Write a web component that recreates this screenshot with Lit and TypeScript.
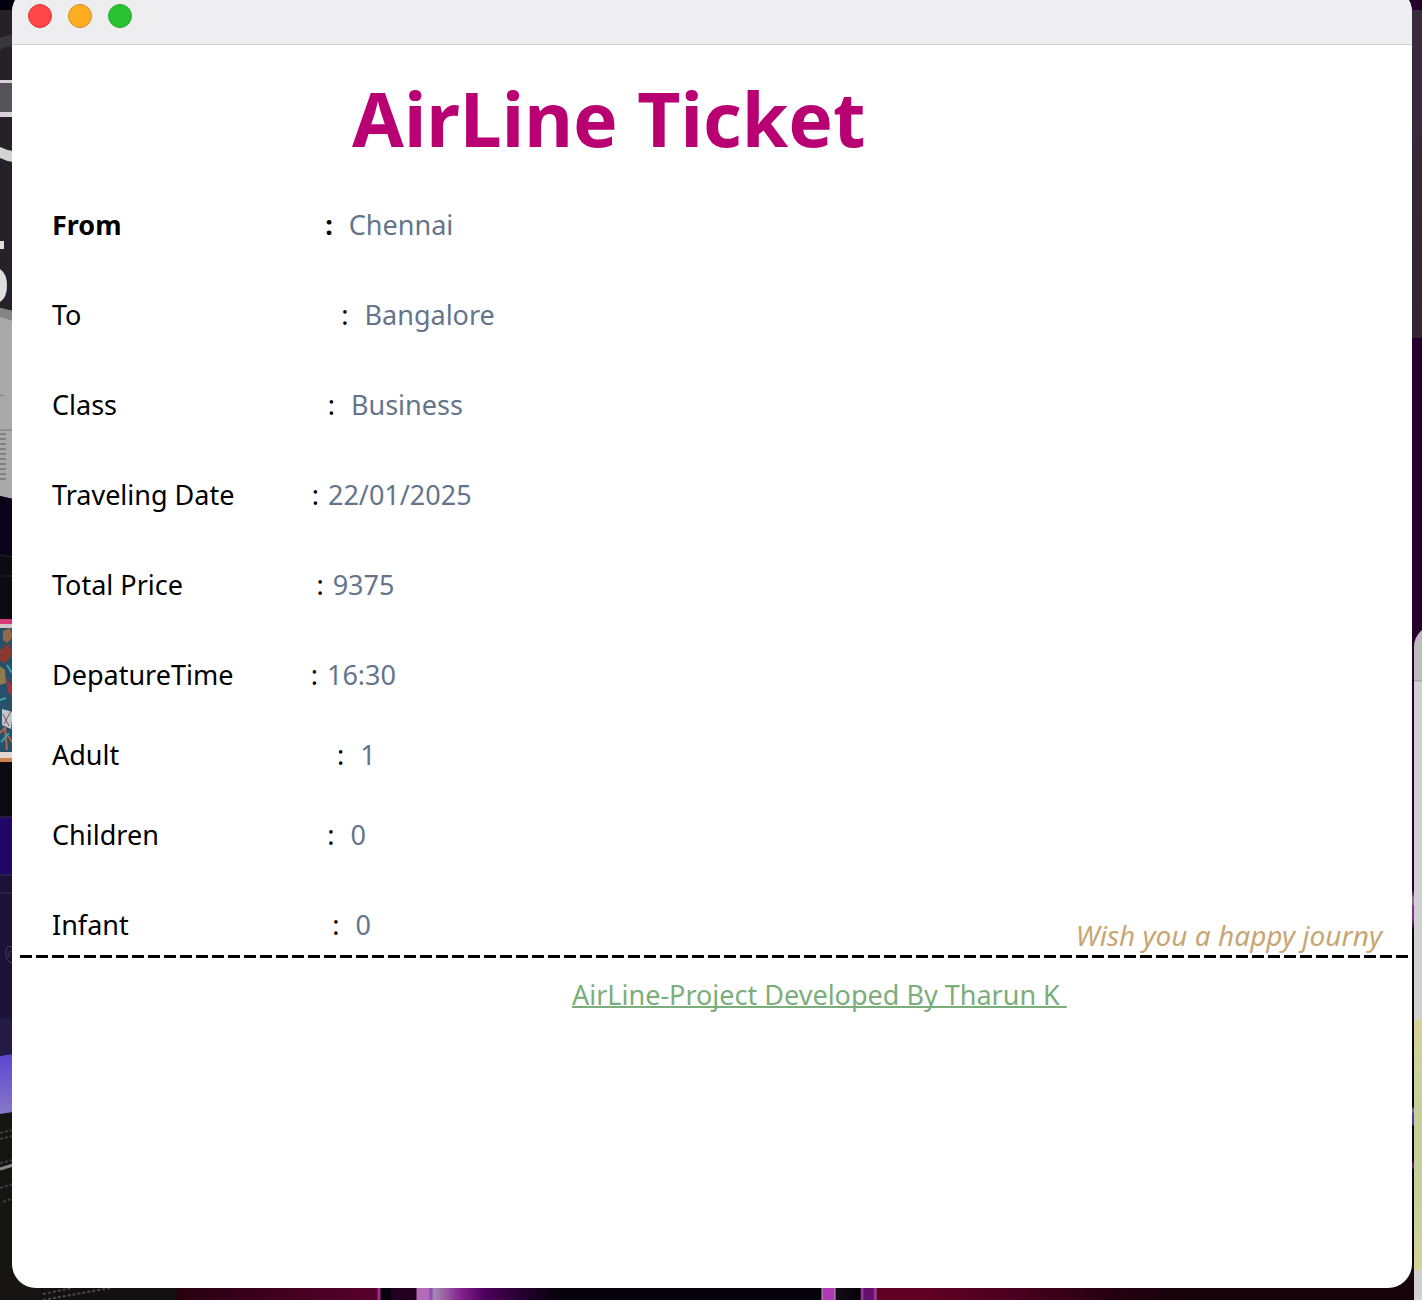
import { LitElement, html, css } from "lit";
import { customElement } from "lit/decorators.js";

interface Detail {
  label: string;
  spaces: number;
  after: number;
  value: string;
  strong?: boolean;
  close?: boolean;
}

const DETAILS: Detail[] = [
  { label: "From", spaces: 29, after: 2, value: "Chennai", strong: true },
  { label: "To", spaces: 37, after: 2, value: "Bangalore" },
  { label: "Class", spaces: 30, after: 2, value: "Business" },
  { label: "Traveling Date", spaces: 11, after: 1, value: "22/01/2025" },
  { label: "Total Price", spaces: 19, after: 1, value: "9375" },
  { label: "DepatureTime", spaces: 11, after: 1, value: "16:30" },
  { label: "Adult", spaces: 31, after: 2, value: "1", close: true },
  { label: "Children", spaces: 24, after: 2, value: "0", close: true },
  { label: "Infant", spaces: 29, after: 2, value: "0" },
];

@customElement("desktop-edge")
export class DesktopEdge extends LitElement {
  static styles = css`
    :host {
      display: block;
    }
    svg {
      display: block;
    }
  `;

  render() {
    return html`<svg width="120" height="1300" viewBox="0 0 120 1300" aria-hidden="true">
      <defs>
        <linearGradient id="glow" x2="0" y2="1">
          <stop offset="0" stop-color="#5b47d2" />
          <stop offset="1" stop-color="#8878c8" />
        </linearGradient>
      </defs>
      <rect width="40" height="1300" fill="#171414" />
      <rect width="40" height="10" fill="#04000e" />
      <rect y="10" width="40" height="300" fill="#242226" />
      <path d="M0 38Q7 35 14 34V46Q6 46 0 50Z" fill="#39373c" />
      <rect y="80" width="13" height="37" fill="#d8d2d8" />
      <rect y="83" width="13" height="29" fill="#57535a" />
      <path d="M0 147Q6 150 13 151V162Q6 161 0 158Z" fill="#d4d4d4" />
      <rect y="241" width="4" height="8" fill="#dedede" />
      <path d="M0 269Q7 274 7 285Q7 298 0 302Z" fill="#dedede" />
      <path d="M0 308L13 311V499L0 496Z" fill="#a9a9aa" />
      <path d="M0 308L13 311V321L0 317Z" fill="#858586" />
      <path d="M0 395L4 396M0 430H13" stroke="#777" />
      <path d="M0 434H6M0 439H6M0 444H6M0 449H6M0 454H6M0 459H6M0 464H6M0 469H6M0 474H6M0 479H6" stroke="#808083" stroke-width="2" />
      <path d="M0 496L13 499V557L0 555Z" fill="#0c0319" />
      <rect y="556" width="13" height="261" fill="#0d0b0f" />
      <path d="M0 576H13M0 555L13 557" stroke="#25232b" />
      <rect y="619" width="13" height="5" fill="#d83a78" />
      <rect y="624" width="13" height="5" fill="#d2c6c7" />
      <rect y="628" width="13" height="124" fill="#27516b" />
      <path d="M3 631L10 628L13 637L7 643L3 640Z" fill="#926849" />
      <path d="M0 650L8 643L13 654L4 664L0 660Z" fill="#883a31" />
      <path d="M0 666L5 670L6 683L0 685Z" fill="#8f7a4f" />
      <path d="M6 678L13 686V696L8 692Z" fill="#a1343b" />
      <path d="M2 709L13 712L11 729L2 725Z" fill="#b8cbd1" />
      <path d="M3 714L9 726M11 711L4 724" stroke="#9f4145" />
      <path d="M0 733L5 728L7 750M8 736L13 743" fill="none" stroke="#b76643" stroke-width="2" />
      <path d="M0 700L6 698M7 665L12 673M1 742L9 733" stroke="#36a1a9" stroke-width="2" />
      <rect y="752" width="13" height="6" fill="#e2d6d1" />
      <rect y="758" width="13" height="4" fill="#ce854d" />
      <rect y="817" width="13" height="58" fill="#210765" />
      <rect y="875" width="13" height="180" fill="#1c1138" />
      <rect y="1018" width="13" height="37" fill="#241a46" />
      <path d="M0 817H13M0 875H13M0 893H13" stroke="#3b3055" />
      <path d="M12 947Q5 944 6 954Q6 961 12 963M12 951Q8 951 9 957" fill="none" stroke="#443b5a" />
      <path d="M0 1056L13 1054V1112L0 1114Z" fill="url(#glow)" />
      <path d="M0 1133L13 1130M0 1139L13 1136M0 1163L13 1160M0 1188L13 1184M3 1202L13 1198" stroke="#403e41" stroke-width="2" stroke-dasharray="3 2" />
      <path d="M0 1169L13 1165" stroke="#8b898d" stroke-width="3" />
      <path d="M43 1294L72 1288M43 1300L110 1288" stroke="#4a484b" stroke-width="2" stroke-dasharray="3 2" />
    </svg>`;
  }
}

@customElement("ticket-window")
export class TicketWindow extends LitElement {
  static styles = css`
    :host {
      display: flex;
      flex-direction: column;
      box-sizing: border-box;
      overflow: hidden;
      background: #fff;
      border-radius: 24px;
      color: #000;
      font-family: "Noto Sans", sans-serif;
      font-size: 27px;
      line-height: 30px;
    }
    .bar {
      display: flex;
      align-items: center;
      gap: 16px;
      height: 56px;
      padding: 0 16px;
      background: #eeeef0;
      border-bottom: 1px solid #cfcfd1;
    }
    .light {
      width: 24px;
      height: 24px;
      padding: 0;
      border: 1px solid #d93b3f;
      border-radius: 50%;
      background: #ff4648;
    }
    .minimise {
      border-color: #d2901c;
      background: #ffae24;
    }
    .zoom {
      border-color: #24a92a;
      background: #28c232;
    }
    .title {
      margin: 23px 0 0 340px;
      font-size: 75px;
      line-height: 100px;
      font-weight: 700;
      color: #b80073;
      white-space: nowrap;
    }
    .body {
      display: flex;
      justify-content: space-between;
      align-items: flex-end;
      padding: 42px 30px 0 40px;
    }
    .details {
      margin: 0;
      padding-bottom: 10px;
    }
    .row {
      display: flex;
      gap: 2px;
      margin-top: 60px;
      white-space: pre;
    }
    .row.close {
      margin-top: 50px;
    }
    .row:first-child {
      margin-top: 0;
    }
    .strong {
      font-weight: 700;
    }
    .value {
      margin: 0;
      color: #64758b;
    }
    .wish {
      margin: 0;
      font-size: 28px;
      font-style: italic;
      color: #c8a674;
    }
    .tear {
      height: 3px;
      margin: 5px 0 0 8px;
      border: 0;
      background: repeating-linear-gradient(90deg, #000 0 12px, transparent 12px 16px);
    }
    .credit {
      margin: 22px 0 0 560px;
      color: #7bae7a;
      text-decoration: underline;
      text-decoration-thickness: 2px;
      text-decoration-skip-ink: none;
      text-underline-offset: 1px;
      white-space: pre;
    }
  `;

  render() {
    return html`
      <header class="bar">
        <button class="light" aria-label="Close"></button>
        <button class="light minimise" aria-label="Minimise"></button>
        <button class="light zoom" aria-label="Zoom"></button>
      </header>
      <h1 class="title">AirLine Ticket</h1>
      <div class="body">
        <dl class="details">
          ${DETAILS.map(
            (d) => html`<div class="row ${d.close ? "close" : ""}"><dt class=${d.strong ? "strong" : ""}>${d.label}${" ".repeat(d.spaces)}:${" ".repeat(d.after)}</dt><dd class="value">${d.value}</dd></div>`
          )}
        </dl>
        <p class="wish">Wish you a happy journy</p>
      </div>
      <hr class="tear" />
      <p class="credit">AirLine-Project Developed By Tharun K </p>
    `;
  }
}

@customElement("app-root")
export class AppRoot extends LitElement {
  static styles = css`
    :host {
      display: block;
    }
    .desktop {
      position: relative;
      display: flex;
      box-sizing: border-box;
      min-height: 100vh;
      padding: 0 10px 12px 12px;
      overflow: hidden;
      background:
        linear-gradient(#26002c 0 10px, #382b3a 10px 40px, #32252f 338px, #26002c 338px 890px, #8b6b91 898px 904px, #8b2b91 906px 918px, #080410 930px 1106px, #7a70a0 1110px, #4b3aa0 1114px 1124px, #080410 1126px 1160px, #7a1f80 1166px, #080410 1170px 1260px, transparent 1270px)
          right top / 10px 100% no-repeat,
        linear-gradient(90deg, #121011 0 176px, #28000f 177px, #58002c 377px, #a52a93 378px 380px, #08020b 381px 390px, #240020 392px 416px, #b36bb8 417px 429px, #8f45b6 430px 431px, #a78bb1 434px, #85248f 460px, #4d005c 485px, #260030 520px, #06030a 560px 821px, #aaa 822px, #ae3bb5 823px 834px, #aaa 835px, #160c18 836px, #050307 860px, #b04bb0 862px, #65106c 864px 873px, #b04bb0 876px, #600023 877px 930px, #4b001e 1010px, #260010 1110px, #16030a 1180px)
          left bottom / 100% 30px no-repeat,
        linear-gradient(#26002c, #26002c) right top / 30px 30px no-repeat,
        #171414;
    }
    .edge {
      position: absolute;
      top: 0;
      left: 0;
    }
    .neighbour {
      position: absolute;
      top: 625px;
      bottom: 0;
      right: -22px;
      width: 30px;
      border-radius: 22px 0 0 0;
      background: linear-gradient(#bcbcbc 0 55px, #a9a9a9 55px 56px, #d1d1d1 57px 395px, #d4d397 395px, #c5cf9b 490px 570px, #d4d397 645px, #d1d1d1 645px);
    }
    .window {
      position: relative;
      flex: 1;
      min-width: 0;
      margin-top: -12px;
    }
  `;

  render() {
    return html`<main class="desktop">
      <desktop-edge class="edge"></desktop-edge>
      <div class="neighbour"></div>
      <ticket-window class="window"></ticket-window>
    </main>`;
  }
}
